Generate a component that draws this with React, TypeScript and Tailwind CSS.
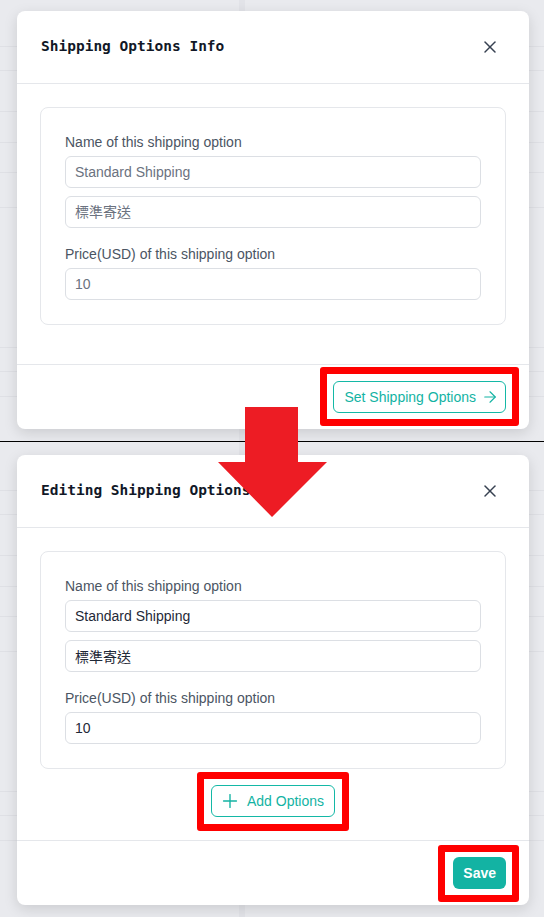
import { X, ArrowRight, Plus } from "lucide-react";

const sans = "font-['Liberation_Sans','Noto_Sans_CJK_TC',Arial,sans-serif]";

function Backdrop({ first }: { first: string }) {
  const rows = ["h-[24px]", "h-[41px]", "h-[31px]", "h-[30px]", "h-[35px]", "h-[140px]", "h-[24px]", "h-[25px]"];
  return (
    <div className="absolute inset-0 bg-[#e9eaee]">
      <div className={`${first} border-b border-[#dfe0e5]`} />
      {rows.map((h, i) => (
        <div key={i} className={`${h} border-b border-[#dfe0e5]`} />
      ))}
      <div className="absolute left-[239px] top-0 bottom-0 w-[6px] bg-[#e2e3e8]" />
    </div>
  );
}

function Field({ value, editing }: { value: string; editing: boolean }) {
  return (
    <input
      readOnly
      value={editing ? value : ""}
      placeholder={value}
      className={`block w-full h-8 rounded-md border border-[#dcdfe4] bg-white pl-[9px] pr-3 text-sm outline-none ${sans} ${
        editing ? "text-[#1f2937]" : "placeholder:text-[#6b7280]"
      }`}
    />
  );
}

function OptionCard({ editing }: { editing: boolean }) {
  return (
    <div className="rounded-lg border border-[#e5e7eb] p-6">
      <p className="text-sm leading-5 text-[#4b5563]">Name of this shipping option</p>
      <div className="mt-1 space-y-2">
        <Field value="Standard Shipping" editing={editing} />
        <Field value="標準寄送" editing={editing} />
      </div>
      <p className="mt-4 text-sm leading-5 text-[#4b5563]">Price(USD) of this shipping option</p>
      <div className="mt-1">
        <Field value="10" editing={editing} />
      </div>
    </div>
  );
}

function Marked({ children, inset }: { children: React.ReactNode; inset: string }) {
  return (
    <span className="relative inline-flex">
      {children}
      <span className={`pointer-events-none absolute ${inset} rounded-[3px] border-[7px] border-[#ff0000]`} />
    </span>
  );
}

function Modal({ title, editing }: { title: string; editing: boolean }) {
  return (
    <div className={`relative ml-[17px] w-[512px] rounded-lg bg-white shadow-[0_4px_14px_rgba(0,0,0,0.13)] ${sans}`}>
      <div className="flex h-[73px] items-center justify-between border-b border-[#e5e7eb] pl-6 pr-[23px]">
        <h2 className="font-['DejaVu_Sans_Mono','Liberation_Mono',monospace] text-[14.5px] font-bold text-[#111827]">
          {title}
        </h2>
        <button className="flex h-8 w-8 items-center justify-center text-[#374151]">
          <X size={20} strokeWidth={1.8} />
        </button>
      </div>

      <div className={`px-[23px] pt-[23px] ${editing ? "pb-[23px]" : "pb-[39px]"}`}>
        <OptionCard editing={editing} />
        {editing && (
          <div className="mt-4 flex justify-center">
            <Marked inset="-inset-[14px] -top-[13px]">
              <button className="flex h-8 items-center gap-[6px] rounded-md border border-[#14b8a6] pl-[7px] pr-[10px] text-sm text-[#13b3a3]">
                <Plus size={22} strokeWidth={1.5} />
                Add Options
              </button>
            </Marked>
          </div>
        )}
      </div>

      <div className="flex justify-end border-t border-[#e5e7eb] px-[23px] py-4">
        {editing ? (
          <Marked inset="-top-[12px] -bottom-[13px] -left-[15px] -right-[13px]">
            <button className="h-8 rounded-md bg-[#13b3a3] px-[10px] text-sm font-semibold text-white">Save</button>
          </Marked>
        ) : (
          <Marked inset="-top-[14px] -bottom-[13px] -inset-x-[13px]">
            <button className="flex h-8 items-center gap-[5px] rounded-md border border-[#14b8a6] pl-[10px] pr-[6px] text-sm text-[#13b3a3]">
              Set Shipping Options
              <ArrowRight size={18} strokeWidth={1.5} />
            </button>
          </Marked>
        )}
      </div>
    </div>
  );
}

export default function App() {
  return (
    <div className="relative h-[917px] w-[544px] overflow-hidden bg-[#e9eaee]">
      {/* BEFORE */}
      <section className="relative h-[441px] pt-[11px]">
        <Backdrop first="h-[47px]" />
        <Modal title="Shipping Options Info" editing={false} />
      </section>

      <div className="h-px bg-black" />

      {/* AFTER */}
      <section className="relative h-[475px] pt-[13px]">
        <Backdrop first="h-[49px]" />
        <Modal title="Editing Shipping Options" editing />
      </section>

      {/* ARROW */}
      <svg className="pointer-events-none absolute left-[218px] top-[407px]" width="110" height="111" viewBox="0 0 110 111">
        <polygon points="27,0 80,0 80,55 109,55 54,110 0,55 27,55" fill="#ed1c24" />
      </svg>
    </div>
  );
}
